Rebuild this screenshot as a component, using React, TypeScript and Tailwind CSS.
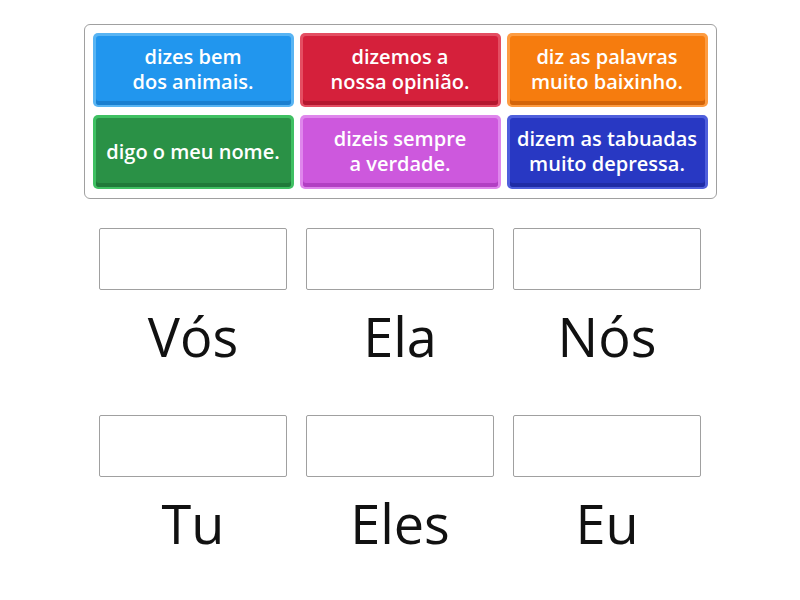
import React from "react";

const tiles = [
  { text: ["dizes bem", "dos animais."], edge: "bg-[#58b4f3]", main: "bg-[#2196ee]", bottom: "shadow-[inset_0_-4px_0_#1a7fd0]" },
  { text: ["dizemos a", "nossa opinião."], edge: "bg-[#e44e62]", main: "bg-[#d5203b]", bottom: "shadow-[inset_0_-4px_0_#b4182f]" },
  { text: ["diz as palavras", "muito baixinho."], edge: "bg-[#fd9c42]", main: "bg-[#f67c0e]", bottom: "shadow-[inset_0_-4px_0_#d3650a]" },
  { text: ["digo o meu nome."], edge: "bg-[#3fc062]", main: "bg-[#2a9146]", bottom: "shadow-[inset_0_-4px_0_#207a39]" },
  { text: ["dizeis sempre", "a verdade."], edge: "bg-[#df86ec]", main: "bg-[#cd58dd]", bottom: "shadow-[inset_0_-4px_0_#b23fc3]" },
  { text: ["dizem as tabuadas", "muito depressa."], edge: "bg-[#4f5fdc]", main: "bg-[#2838c3]", bottom: "shadow-[inset_0_-4px_0_#1f2ca6]" },
];

const rows = [
  ["Vós", "Ela", "Nós"],
  ["Tu", "Eles", "Eu"],
];

export default function App() {
  return (
    <div className="w-[800px] h-[600px] bg-white flex flex-col items-center pt-[24px]" style={{ fontFamily: "'Open Sans', sans-serif" }}>
      <div className="w-[633px] border border-[#a0a0a0] rounded-[6px] px-[8px] pt-[8px] pb-[9px] grid grid-cols-3 gap-x-[6px] gap-y-[8px]">
        {tiles.map((t, i) => (
          <div key={i} className={`${t.edge} h-[74px] rounded-[5px] p-[3px] pb-[2px]`}>
            <div className={`${t.main} ${t.bottom} h-full rounded-[3px] flex flex-col items-center justify-center text-white font-semibold text-[20px] leading-[25px] pb-[3px]`}>
              {t.text.map((line, j) => (
                <span key={j} className="whitespace-nowrap">{line}</span>
              ))}
            </div>
          </div>
        ))}
      </div>

      <div className="flex flex-col mt-[29px]">
        {rows.map((row, r) => (
          <div key={r} className="flex gap-x-[19px] h-[187px]">
            {row.map((label) => (
              <div key={label} className="w-[188px] flex flex-col items-center">
                <div className="w-[188px] h-[62px] border border-[#a0a0a0] rounded-[2px]" />
                <div className="text-[54px] leading-[80px] mt-[6px] text-[#111]">{label}</div>
              </div>
            ))}
          </div>
        ))}
      </div>
    </div>
  );
}
